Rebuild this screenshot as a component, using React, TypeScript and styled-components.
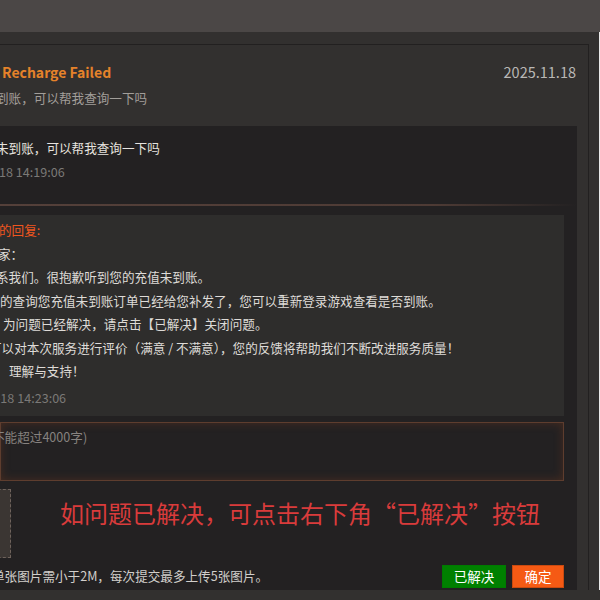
import React from "react";
import styled, { createGlobalStyle } from "styled-components";

const Global = createGlobalStyle`
  html, body { margin: 0; padding: 0; background: #32302f; }
  body {
    width: 600px; height: 600px; overflow: hidden;
    font-family: "Noto Sans CJK SC", "Noto Sans", sans-serif;
  }
  * { box-sizing: border-box; }
`;

const Page = styled.div`
  width: 600px; height: 600px;
  display: flex; flex-direction: column;
  background: #32302f; overflow: hidden;
`;

const TopBar = styled.div`
  height: 32px; flex: none; background: #4b4746;
`;

const Main = styled.div`
  height: 558px; flex: none;
  display: flex; flex-direction: column;
  padding-top: 12px;
  border-right: 1px solid #e9e9e9;
`;

const BottomStrip = styled.div`
  flex: 1; background: #32302f;
`;

const Panel = styled.section`
  width: 589px; flex: 1;
  display: flex; flex-direction: column;
  border-top: 1px solid #222020;
  border-right: 1px solid #222020;
  padding-right: 11px;
  background: #32302f;
  overflow: hidden;
`;

const Header = styled.header`
  padding: 17px 0 18px 0;
  display: flex; flex-direction: column; gap: 6px;
`;

const HeaderRow = styled.div`
  display: flex; justify-content: space-between; align-items: center;
  height: 20px; padding-right: 1px;
`;

const Title = styled.h1`
  margin: 0 0 0 2px;
  font-size: 14px; font-weight: 700; line-height: 20px;
  color: #e5822a;
`;

const DateText = styled.span`
  font-size: 14.5px; line-height: 20px; color: #b9b7b5;
`;

const Text = styled.div<{ $shift?: number; $color?: string; $lh?: number }>`
  margin-left: ${(p) => p.$shift ?? 0}px;
  font-size: 12.6px;
  line-height: ${(p) => p.$lh ?? 20}px;
  color: ${(p) => p.$color ?? "#dedbd7"};
  white-space: nowrap;
`;

const Content = styled.div`
  flex: 1; background: #232122;
  display: flex; flex-direction: column;
  padding: 0 13px 3px 0;
`;

const UserMsg = styled.div`
  padding: 12px 0 22px 0;
  display: flex; flex-direction: column; gap: 4px;
`;

const Divider = styled.div`
  height: 2px; margin-right: -13px;
  background: linear-gradient(to right, #54403a 0%, #4e3b35 75%, rgba(78,59,53,0) 100%);
`;

const ReplyBox = styled.div`
  margin-top: 9px;
  background: #2e2d2c;
  padding: 3px 0 8px 0;
  display: flex; flex-direction: column;
`;

const Stamp = styled.div<{ $shift?: number }>`
  margin: 5px 0 0 ${(p) => p.$shift ?? 0}px;
  font-size: 12.6px; line-height: 20px; color: #7b7977;
  white-space: nowrap;
`;

const InputBox = styled.div`
  margin-top: 6px; height: 59px;
  border: 1px solid #5e3d2e;
  background: #232122;
  box-shadow: inset 0 0 10px rgba(115, 58, 32, 0.45);
  padding-top: 5px;
`;

const UploadRow = styled.div`
  margin-top: 8px; height: 69px;
  display: flex; align-items: flex-start;
`;

const UploadBox = styled.div`
  width: 70px; height: 69px; margin-left: -59px; flex: none;
  background: #3b3633;
  border: 1px dashed #6f635c;
`;

const Hint = styled.div`
  margin: 7px 0 0 49px;
  font-size: 24px; line-height: 34px; color: #d93b3b;
  white-space: nowrap;
`;

const BottomRow = styled.div`
  margin-top: 7px; height: 23px;
  display: flex; align-items: center; gap: 6px;
`;

const Tip = styled.div`
  flex: 1; margin-left: -8px;
  font-size: 12.6px; line-height: 20px; color: #d2cfcb;
  white-space: nowrap;
  margin-top: -1px;
`;

const Button = styled.button<{ $variant: "green" | "orange" }>`
  height: 23px; padding: 0;
  width: ${(p) => (p.$variant === "green" ? 64 : 52)}px;
  border: 1px solid ${(p) => (p.$variant === "green" ? "#007a00" : "#c94a10")};
  background: ${(p) => (p.$variant === "green" ? "#008000" : "#f55a14")};
  color: #ffffff;
  font-family: "Noto Sans CJK SC", sans-serif;
  font-size: 13.5px; line-height: 21px;
  cursor: pointer;
`;

const replyLines: { text: string; shift: number; color?: string }[] = [
  { text: "的回复:", shift: -1, color: "#f0561f" },
  { text: "家：", shift: -2 },
  { text: "系我们。很抱歉听到您的充值未到账。", shift: -4 },
  { text: "的查询您充值未到账订单已经给您补发了，您可以重新登录游戏查看是否到账。", shift: 0 },
  { text: "为问题已经解决，请点击【已解决】关闭问题。", shift: 3 },
  { text: "可以对本次服务进行评价（满意 / 不满意），您的反馈将帮助我们不断改进服务质量！", shift: -11 },
  { text: "理解与支持！", shift: 9 },
];

export default function App() {
  return (
    <>
      <Global />
      <Page>
        <TopBar />
        <Main>
          <Panel>
            <Header>
              <HeaderRow>
                <Title>Recharge Failed</Title>
                <DateText>2025.11.18</DateText>
              </HeaderRow>
              <Text $shift={-4} $color="#a29e9a">到账，可以帮我查询一下吗</Text>
            </Header>
            <Content>
              <UserMsg>
                <Text $shift={-4} $color="#e6e3df">未到账，可以帮我查询一下吗</Text>
                <Text $shift={-1} $color="#7b7977">18 14:19:06</Text>
              </UserMsg>
              <Divider />
              <ReplyBox>
                {replyLines.map((l, i) => (
                  <Text key={i} $shift={l.shift} $color={l.color} $lh={23.5}>
                    {l.text}
                  </Text>
                ))}
                <Stamp $shift={-4}>-18 14:23:06</Stamp>
              </ReplyBox>
              <InputBox>
                <Text $shift={-9} $color="#86827f" $lh={18}>不能超过4000字)</Text>
              </InputBox>
              <UploadRow>
                <UploadBox />
                <Hint>如问题已解决，可点击右下角“已解决”按钮</Hint>
              </UploadRow>
              <BottomRow>
                <Tip>单张图片需小于2M，每次提交最多上传5张图片。</Tip>
                <Button $variant="green">已解决</Button>
                <Button $variant="orange">确定</Button>
              </BottomRow>
            </Content>
          </Panel>
        </Main>
        <BottomStrip />
      </Page>
    </>
  );
}
